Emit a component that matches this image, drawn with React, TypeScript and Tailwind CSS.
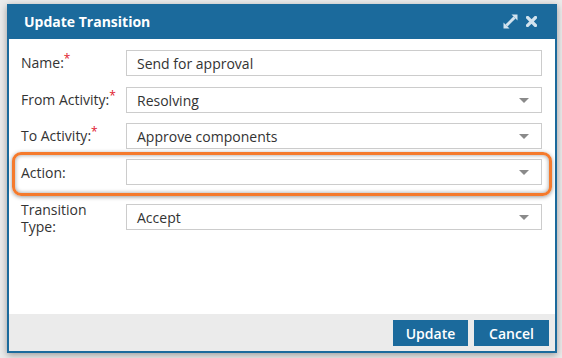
import React from 'react';

const font = { fontFamily: '"Open Sans", "Liberation Sans", sans-serif' };

function Caret() {
  return (
    <svg width="10" height="5" viewBox="0 0 10 5" className="shrink-0">
      <path d="M0 0 L10 0 L5 5 Z" fill="#8a8a8a" />
    </svg>
  );
}

function Label({ text, required, className = '' }: { text: string; required?: boolean; className?: string }) {
  return (
    <div className={`w-[105px] shrink-0 pr-[6px] text-[14px] leading-[17px] text-[#333] ${className}`}>
      {text}
      {required && <span className="relative -top-[5px] text-[12px] text-[#e0182d]">*</span>}
    </div>
  );
}

function TextField({ value }: { value: string }) {
  return (
    <div className="flex h-[26px] w-[416px] items-center border border-[#cccccc] bg-white pl-[10px] text-[14px] text-[#333]">
      {value}
    </div>
  );
}

function SelectField({ value }: { value: string }) {
  return (
    <div className="flex h-[26px] w-[416px] items-center justify-between border border-[#cccccc] bg-white pl-[10px] pr-[12px] text-[14px] text-[#333]">
      <span>{value}</span>
      <Caret />
    </div>
  );
}

export default function App() {
  return (
    <div className="h-[358px] w-[562px] overflow-hidden bg-[#ebebeb] pl-[7px] pt-[4px]" style={font}>
      <div className="flex h-[349px] w-[550px] flex-col border-2 border-t-0 border-[#1b6a9c] bg-white shadow-[0_2px_7px_rgba(0,0,0,0.35)]">
        {/* header */}
        <div className="flex h-[35px] shrink-0 items-center justify-between bg-[#1b6a9c] pl-[15px] pr-[18px]">
          <span className="text-[14px] font-bold text-white">Update Transition</span>
          <div className="flex items-center gap-[8px]">
            <svg width="15" height="15" viewBox="0 0 15 15">
              <path d="M8.5 0.5 L14.5 0.5 L14.5 6.5 Z" fill="#d3e3ee" />
              <path d="M0.5 14.5 L0.5 8.5 L6.5 14.5 Z" fill="#d3e3ee" />
              <path d="M11.5 3.5 L3.5 11.5" stroke="#d3e3ee" strokeWidth="3" />
            </svg>
            <svg width="11" height="11" viewBox="0 0 11 11">
              <path d="M1.5 1.5 L9.5 9.5 M9.5 1.5 L1.5 9.5" stroke="#d3e3ee" strokeWidth="3.2" strokeLinecap="square" />
            </svg>
          </div>
        </div>

        {/* body */}
        <div className="flex flex-1 flex-col pt-[11px]">
          <div className="flex items-center pl-[12px]">
            <Label text="Name:" required />
            <TextField value="Send for approval" />
          </div>
          <div className="mt-[11px] flex items-center pl-[12px]">
            <Label text="From Activity:" required />
            <SelectField value="Resolving" />
          </div>
          <div className="mt-[10px] flex items-center pl-[12px]">
            <Label text="To Activity:" required />
            <SelectField value="Approve components" />
          </div>
          <div className="mx-[3px] mt-[3px] flex items-center rounded-[9px] border-[3px] border-[#f57a2c] pb-[8px] pl-[6px] pr-[7px] pt-[4px] shadow-[0_1px_4px_rgba(0,0,0,0.4),inset_0_0_4px_rgba(0,0,0,0.4)]">
            <Label text="Action:" />
            <SelectField value="" />
          </div>
          <div className="mt-[8px] flex items-start pl-[12px]">
            <Label text="Transition Type:" className="-mt-[3px]" />
            <SelectField value="Accept" />
          </div>
        </div>

        {/* footer */}
        <div className="flex h-[37px] shrink-0 items-start justify-end gap-[6px] bg-[#ebebeb] pr-[6px] pt-[6px]">
          <button className="h-[26px] w-[75px] bg-[#1b6a9c] text-[14px] font-semibold text-white">Update</button>
          <button className="h-[26px] w-[75px] bg-[#1b6a9c] text-[14px] font-semibold text-white">Cancel</button>
        </div>
      </div>
    </div>
  );
}
